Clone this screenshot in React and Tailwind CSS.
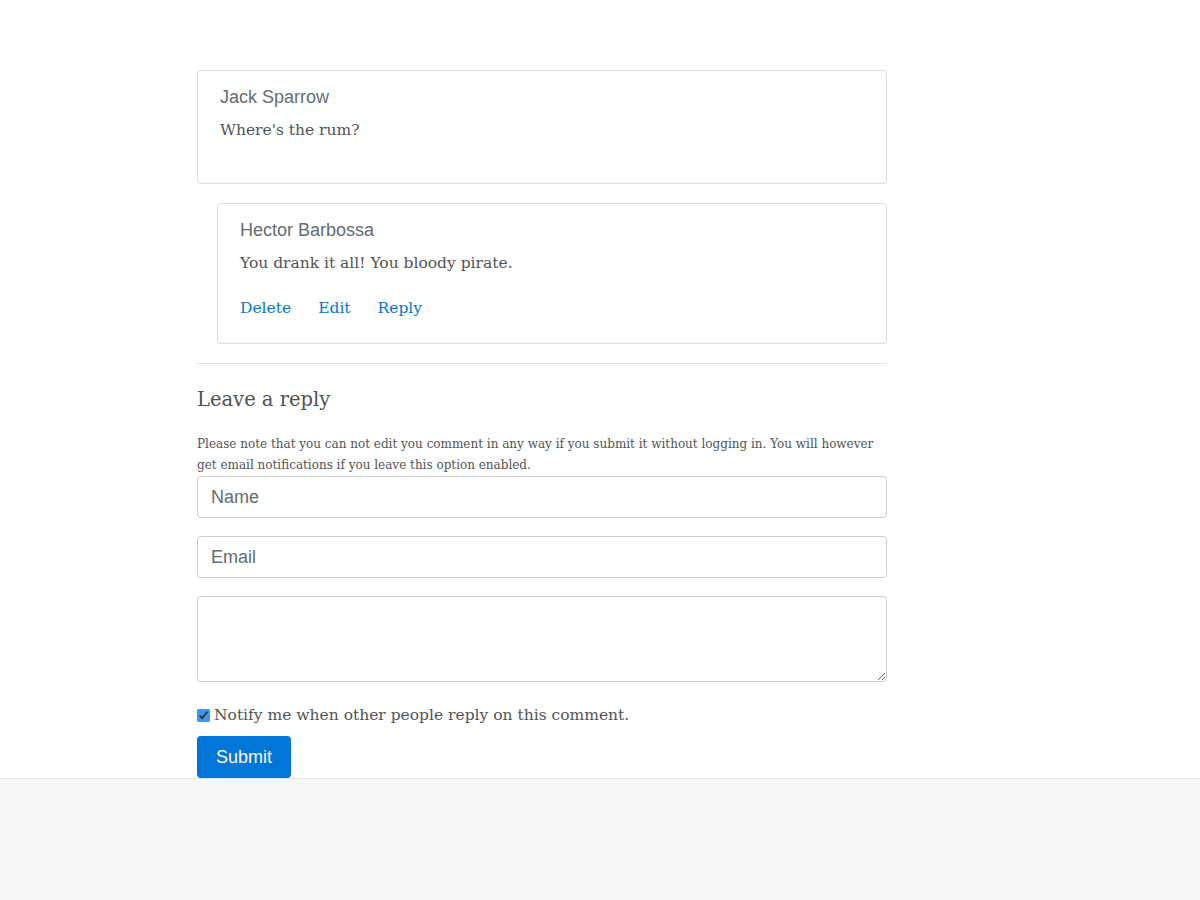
import React from 'react';

function Comment({ name, text, actions, nested }) {
  return (
    <div
      className={`border border-[#dcdcdc] rounded-[4px] bg-white px-[22px] pt-[14px] ${
        actions ? 'pb-[23px]' : 'pb-[41px]'
      } ${nested ? 'ml-[20px]' : ''}`}
    >
      <div className="text-[18px] leading-[24px] text-[#636c72] font-['Liberation_Sans',Arial,sans-serif]">{name}</div>
      <p className="mt-[9px] text-[15.5px] leading-[24px] text-[#4f5356] font-['DejaVu_Serif',Georgia,serif]">{text}</p>
      {actions && (
        <div className="mt-[21px] flex gap-[27px] text-[15.5px] leading-[24px] text-[#0275d8] font-['DejaVu_Serif',Georgia,serif]">
          {actions.map((a) => (
            <a key={a} href="#" className="hover:underline">{a}</a>
          ))}
        </div>
      )}
    </div>
  );
}

export default function App() {
  return (
    <div className="min-h-[900px] flex flex-col bg-white">
      <main className="flex-1 pt-[70px]">
        <div className="w-[690px] ml-[197px]">
          <Comment name="Jack Sparrow" text="Where's the rum?" />
          <div className="mt-[19px]">
            <Comment
              nested
              name="Hector Barbossa"
              text="You drank it all! You bloody pirate."
              actions={['Delete', 'Edit', 'Reply']}
            />
          </div>
          <hr className="mt-[19px] border-0 border-t border-[#e5e5e5]" />
          <h3 className="mt-[22px] text-[19.5px] leading-[28px] text-[#4f5356] font-['DejaVu_Serif',Georgia,serif]">Leave a reply</h3>
          <p className="mt-[20px] pr-[8px] text-[12px] leading-[21px] text-[#4f5356] font-['DejaVu_Serif',Georgia,serif]">
            Please note that you can not edit you comment in any way if you submit it without logging in. You will however get email notifications if you leave this option enabled.
          </p>
          <div className="flex flex-col gap-[18px]">
            <input
              placeholder="Name"
              className="h-[42px] w-full border border-[#cccccc] rounded-[4px] px-[13px] text-[18px] text-[#464a4c] placeholder:text-[#636c72] font-['Liberation_Sans',Arial,sans-serif] outline-none"
            />
            <input
              placeholder="Email"
              className="h-[42px] w-full border border-[#cccccc] rounded-[4px] px-[13px] text-[18px] text-[#464a4c] placeholder:text-[#636c72] font-['Liberation_Sans',Arial,sans-serif] outline-none"
            />
            <textarea className="h-[86px] w-full border border-[#cccccc] rounded-[4px] px-[13px] py-[8px] text-[17px] outline-none block" />
          </div>
          <label className="mt-[21px] flex items-center gap-[4px] text-[15.5px] leading-[24px] text-[#4f5356] font-['DejaVu_Serif',Georgia,serif]">
            <input type="checkbox" defaultChecked className="w-[13px] h-[13px] accent-[#3b99fc]" />
            Notify me when other people reply on this comment.
          </label>
          <button className="mt-[9px] h-[42px] w-[94px] rounded-[4px] bg-[#0275d8] text-white text-[18px] font-['Liberation_Sans',Arial,sans-serif]">
            Submit
          </button>
        </div>
      </main>
      <footer className="h-[122px] border-t border-[#e5e5e5] bg-[#f7f7f7]" />
    </div>
  );
}
